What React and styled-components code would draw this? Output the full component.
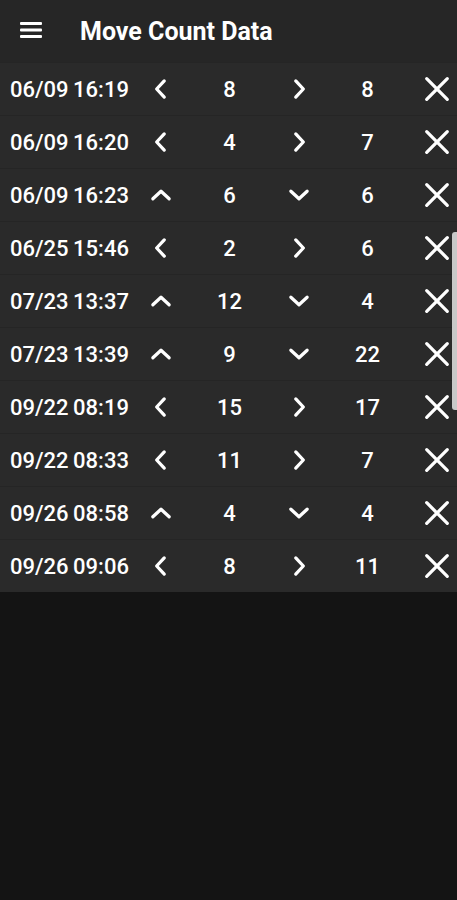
import React from 'react';
import styled, { createGlobalStyle } from 'styled-components';

const GlobalStyle = createGlobalStyle`
  html, body {
    margin: 0;
    padding: 0;
    background: #141414;
    font-family: Roboto, "Noto Sans", sans-serif;
    overflow: hidden;
  }
`;

const records = [
  { date: '06/09 16:19', dir: 'h', a: 8, b: 8 },
  { date: '06/09 16:20', dir: 'h', a: 4, b: 7 },
  { date: '06/09 16:23', dir: 'v', a: 6, b: 6 },
  { date: '06/25 15:46', dir: 'h', a: 2, b: 6 },
  { date: '07/23 13:37', dir: 'v', a: 12, b: 4 },
  { date: '07/23 13:39', dir: 'v', a: 9, b: 22 },
  { date: '09/22 08:19', dir: 'h', a: 15, b: 17 },
  { date: '09/22 08:33', dir: 'h', a: 11, b: 7 },
  { date: '09/26 08:58', dir: 'v', a: 4, b: 4 },
  { date: '09/26 09:06', dir: 'h', a: 8, b: 11 },
];

const Chevron = ({ dir }) => {
  const paths = {
    left: 'M15 4.5 L8 12 L15 19.5',
    right: 'M9 4.5 L16 12 L9 19.5',
    up: 'M4.5 15.5 L12 8.5 L19.5 15.5',
    down: 'M4.5 8.5 L12 15.5 L19.5 8.5',
  };
  return (
    <svg width="26" height="26" viewBox="0 0 24 24" fill="none" stroke="#fff" strokeWidth="3" strokeLinecap="round" strokeLinejoin="round">
      <path d={paths[dir]} />
    </svg>
  );
};

const CloseIcon = () => (
  <svg width="26" height="26" viewBox="0 0 24 24" fill="none" stroke="#fff" strokeWidth="3" strokeLinecap="round">
    <path d="M2.5 2.5 L21.5 21.5 M21.5 2.5 L2.5 21.5" />
  </svg>
);

const MenuIcon = () => (
  <svg width="22" height="18" viewBox="0 0 22 18" fill="#fff">
    <rect x="0" y="1" width="22" height="3" rx="1" />
    <rect x="0" y="7.5" width="22" height="3" rx="1" />
    <rect x="0" y="14" width="22" height="3" rx="1" />
  </svg>
);

export default function App() {
  return (
    <>
      <GlobalStyle />
      <Page>
        <Header>
          <MenuButton><MenuIcon /></MenuButton>
          <Title>Move Count Data</Title>
        </Header>
        <List>
          {records.map((r) => (
            <Row key={r.date}>
              <DateCell>{r.date}</DateCell>
              <IconCell><Chevron dir={r.dir === 'h' ? 'left' : 'up'} /></IconCell>
              <NumCell>{r.a}</NumCell>
              <IconCell><Chevron dir={r.dir === 'h' ? 'right' : 'down'} /></IconCell>
              <NumCell>{r.b}</NumCell>
              <CloseCell><CloseIcon /></CloseCell>
            </Row>
          ))}
          <ScrollThumb />
        </List>
      </Page>
    </>
  );
}

const Page = styled.div`
  width: 457px;
  height: 900px;
  background: #141414;
  display: flex;
  flex-direction: column;
`;

const Header = styled.div`
  height: 62px;
  background: #262626;
  display: flex;
  align-items: center;
`;

const MenuButton = styled.div`
  width: 62px;
  display: flex;
  justify-content: center;
  margin-top: -2px;
`;

const Title = styled.div`
  color: #fff;
  font-size: 25px;
  font-weight: 700;
  margin-left: 18px;
  margin-top: 1px;
`;

const List = styled.div`
  position: relative;
  display: flex;
  flex-direction: column;
`;

const Row = styled.div`
  height: 53px;
  box-sizing: border-box;
  background: #2a2a2a;
  border-top: 1px solid #252525;
  display: grid;
  grid-template-columns: 116px 69px 69px 69px 69px 1fr;
  align-items: center;
  padding-left: 10px;
  color: #fff;
  font-size: 22px;
  font-weight: 500;
`;

const DateCell = styled.div`
  white-space: nowrap;
  word-spacing: -1px;
`;

const IconCell = styled.div`
  display: flex;
  justify-content: center;
  align-items: center;
`;

const CloseCell = styled(IconCell)`
  justify-content: flex-end;
  padding-right: 7px;
`;

const NumCell = styled.div`
  text-align: center;
`;

const ScrollThumb = styled.div`
  position: absolute;
  right: 0;
  top: 170px;
  width: 5px;
  height: 178px;
  background: #c8c8c8;
  border-radius: 3px 0 0 3px;
`;
